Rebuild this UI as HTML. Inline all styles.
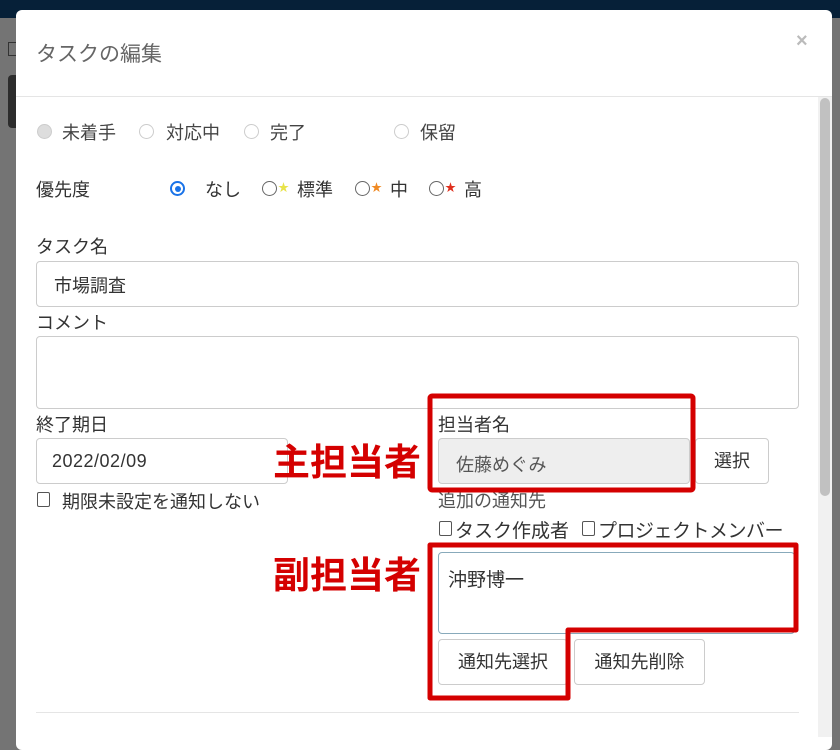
<!DOCTYPE html>
<html><head><meta charset="utf-8"><style>
*{box-sizing:border-box;margin:0;padding:0}
body{width:840px;height:733px;overflow:hidden;background:#747474;position:relative;font-family:"Liberation Sans","Noto Sans CJK JP",sans-serif;color:#333;font-size:18px}
.a{position:absolute;white-space:nowrap}
.top{left:0;top:0;width:840px;height:18px;background:#062038}
.modal{left:16px;top:10px;width:816px;height:740px;background:#fff;border-radius:6px}
.inp{position:absolute;border:1px solid #ccc;border-radius:4px;background:#fff}
.rad{position:absolute;width:15px;height:15px;border-radius:50%;border:1px solid #aaa;background:#fff}
.cb{position:absolute;width:13px;height:15px;border:1px solid #555;border-radius:2px;background:#fff}
.btn{position:absolute;border:1px solid #ccc;border-radius:4px;background:#fff;text-align:center;color:#333}
.star{font-size:11px;position:absolute}
</style></head><body>
<div class="a top"></div>
<div class="a" style="left:8px;top:42px;width:8px;height:14px;border:1px solid #333;border-right:none"></div>
<div class="a" style="left:8px;top:75px;width:8px;height:53px;background:#2c2c2c;border-radius:4px 0 0 4px"></div>
<div class="a modal"></div>
<div class="a" style="left:36px;top:38px;font-size:21px;color:#666">タスクの編集</div>
<div class="a" style="left:796px;top:30px;font-size:20px;color:#bbb;font-weight:bold">×</div>
<div class="a" style="left:16px;top:96px;width:816px;height:1px;background:#e5e5e5"></div>
<div class="a" style="left:818px;top:97px;width:14px;height:640px;background:#f1f1f1"></div>
<div class="a" style="left:820px;top:98px;width:10px;height:398px;background:#c1c1c1;border-radius:5px"></div>

<div class="rad" style="left:37px;top:124px;background:#ddd;border-color:#ccc"></div>
<div class="a" style="left:62px;top:119px;color:#444">未着手</div>
<div class="rad" style="left:139px;top:124px;border-color:#ccc"></div>
<div class="a" style="left:166px;top:119px;color:#444">対応中</div>
<div class="rad" style="left:244px;top:124px;border-color:#ccc"></div>
<div class="a" style="left:270px;top:119px;color:#444">完了</div>
<div class="rad" style="left:394px;top:124px;border-color:#ccc"></div>
<div class="a" style="left:420px;top:119px;color:#444">保留</div>

<div class="a" style="left:36px;top:176px">優先度</div>
<div class="rad" style="left:170px;top:181px;border:2px solid #1a73e8"><div style="position:absolute;left:2.5px;top:2.5px;width:6px;height:6px;border-radius:50%;background:#1a73e8"></div></div>
<div class="a" style="left:205px;top:176px">なし</div>
<div class="rad" style="left:262px;top:181px;border-color:#666"></div><span class="a star" style="left:278px;top:179px;color:#e8e34a">★</span>
<div class="a" style="left:297px;top:176px">標準</div>
<div class="rad" style="left:355px;top:181px;border-color:#666"></div><span class="a star" style="left:371px;top:179px;color:#f08a24">★</span>
<div class="a" style="left:390px;top:176px">中</div>
<div class="rad" style="left:429px;top:181px;border-color:#666"></div><span class="a star" style="left:445px;top:179px;color:#e0301e">★</span>
<div class="a" style="left:464px;top:176px">高</div>

<div class="a" style="left:36px;top:233px">タスク名</div>
<div class="inp" style="left:36px;top:261px;width:763px;height:46px"></div>
<div class="a" style="left:54px;top:272px">市場調査</div>
<div class="a" style="left:36px;top:309px">コメント</div>
<div class="inp" style="left:36px;top:336px;width:763px;height:73px"></div>

<div class="a" style="left:36px;top:411px">終了期日</div>
<div class="inp" style="left:36px;top:438px;width:252px;height:46px"></div>
<div class="a" style="left:52px;top:451px;font-size:18px;letter-spacing:0.5px">2022/02/09</div>
<div class="cb" style="left:37px;top:492px"></div>
<div class="a" style="left:62px;top:488px">期限未設定を通知しない</div>

<div class="a" style="left:438px;top:411px">担当者名</div>
<div class="inp" style="left:438px;top:438px;width:252px;height:46px;background:#eee"></div>
<div class="a" style="left:456px;top:451px;color:#555">佐藤めぐみ</div>
<div class="btn" style="left:695px;top:438px;width:74px;height:46px;line-height:44px">選択</div>
<div class="a" style="left:438px;top:487px;color:#555">追加の通知先</div>
<div class="cb" style="left:439px;top:521px"></div>
<div class="a" style="left:455px;top:516px;font-size:19px">タスク作成者</div>
<div class="cb" style="left:582px;top:521px"></div>
<div class="a" style="left:598px;top:516px;font-size:19px;letter-spacing:-0.5px">プロジェクトメンバー</div>
<div class="inp" style="left:438px;top:552px;width:357px;height:82px;border-color:#8ab"></div>
<div class="a" style="left:448px;top:565px;font-size:19px">沖野博一</div>
<div class="btn" style="left:438px;top:639px;width:130px;height:46px;line-height:44px">通知先選択</div>
<div class="btn" style="left:574px;top:639px;width:131px;height:46px;line-height:44px">通知先削除</div>
<div class="a" style="left:36px;top:712px;width:763px;height:1px;background:#e5e5e5"></div>

<div class="a" style="left:273px;top:432px;font-size:37px;font-weight:bold;color:#d40000">主担当者</div>
<div class="a" style="left:273px;top:545px;font-size:37px;font-weight:bold;color:#d40000">副担当者</div>
<svg class="a" style="left:0;top:0" width="840" height="733">
<rect x="430" y="396" width="263" height="94" fill="none" stroke="#d40000" stroke-width="5" rx="2"/>
<path d="M430 545 H796 V630 H568 V698 H430 Z" fill="none" stroke="#d40000" stroke-width="5" stroke-linejoin="round"/>
</svg>
</body></html>
